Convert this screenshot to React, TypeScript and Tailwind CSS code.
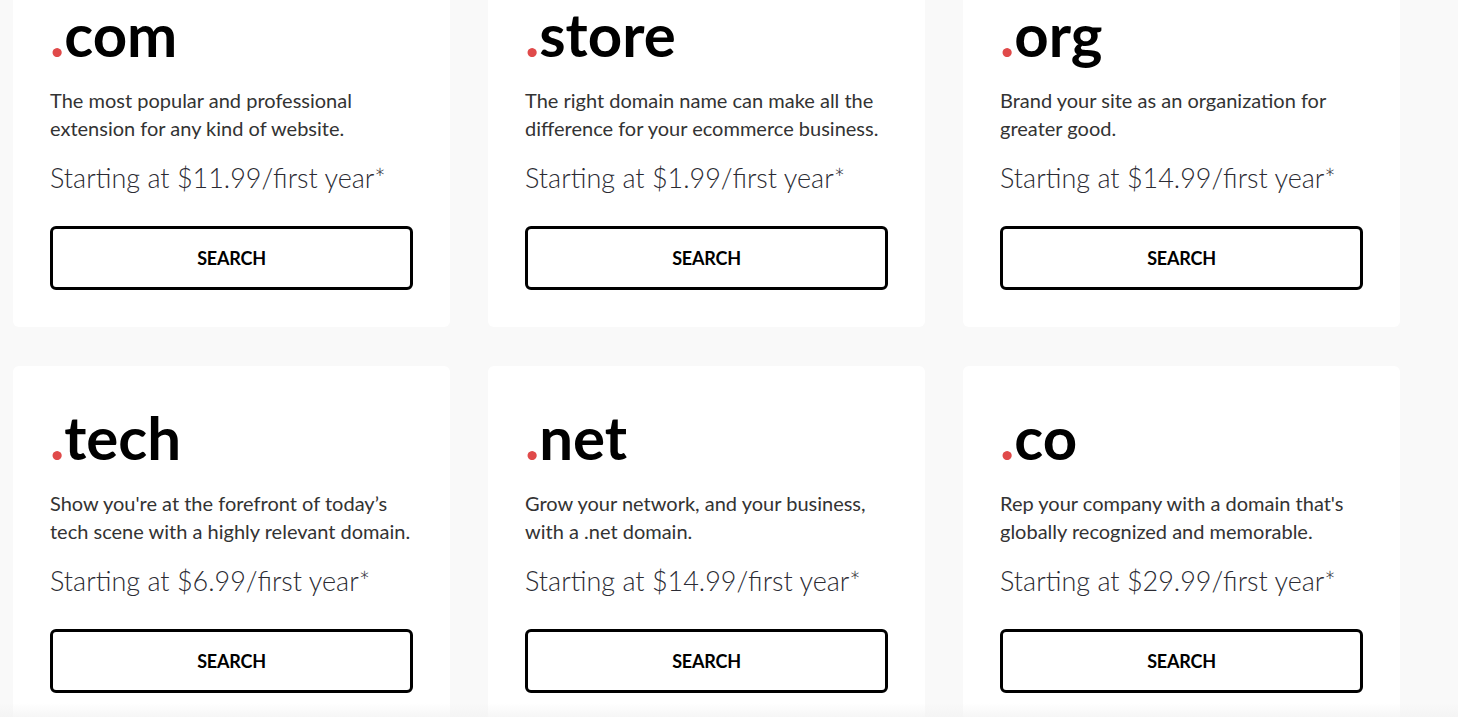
const domains = [
  {
    tld: 'com',
    description: 'The most popular and professional extension for any kind of website.',
    price: '$11.99',
  },
  {
    tld: 'store',
    description: 'The right domain name can make all the difference for your ecommerce business.',
    price: '$1.99',
  },
  {
    tld: 'org',
    description: 'Brand your site as an organization for greater good.',
    price: '$14.99',
  },
  {
    tld: 'tech',
    description: "Show you're at the forefront of today\u2019s tech scene with a highly relevant domain.",
    price: '$6.99',
  },
  {
    tld: 'net',
    description: 'Grow your network, and your business, with a .net domain.',
    price: '$14.99',
  },
  {
    tld: 'co',
    description: "Rep your company with a domain that's globally recognized and memorable.",
    price: '$29.99',
  },
];

function DomainCard({ tld, description, price }: { tld: string; description: string; price: string }) {
  return (
    <div className="bg-white rounded-md px-[37px] pt-[35px] pb-[37px] flex flex-col">
      <h2 className="text-[60px] leading-[72px] font-bold text-black">
        <span className="text-[#e04a4a]">.</span>
        {tld}
      </h2>
      <p className="mt-[16px] text-[20px] leading-[28px] text-[#333333]">{description}</p>
      <p className="mt-[19px] text-[27px] leading-[34px] font-light text-[#2b2b33]">
        Starting at {price}/first year*
      </p>
      <button
        type="button"
        className="mt-[31px] h-[64px] w-full border-[3px] border-black rounded-[6px] bg-white text-[18px] font-bold text-black tracking-[-0.2px]"
      >
        SEARCH
      </button>
    </div>
  );
}

export default function App() {
  return (
    <div
      className="relative h-[717px] overflow-hidden bg-[#f9f9f9]"
      style={{ fontFamily: 'Lato, "Open Sans", sans-serif' }}
    >
      <div className="pl-[13px] -mt-[37px] grid grid-cols-[437px_437px_437px] gap-x-[38px] gap-y-[39px]">
        {domains.map((d) => (
          <DomainCard key={d.tld} {...d} />
        ))}
      </div>
      <div className="absolute left-0 right-0 bottom-0 h-[14px] bg-gradient-to-b from-transparent to-[#f2f2f2]/70" />
    </div>
  );
}
